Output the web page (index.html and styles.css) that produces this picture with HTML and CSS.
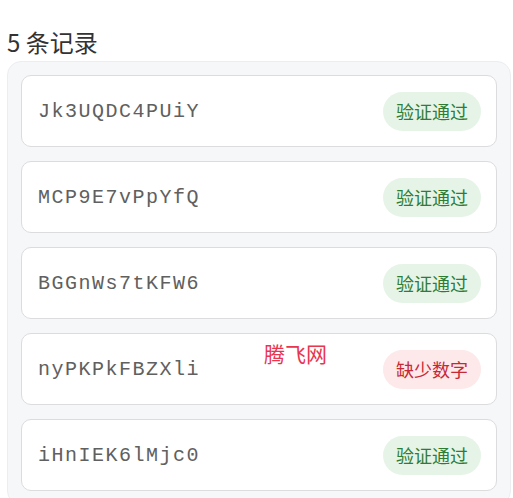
FILE: index.html
```html
<!DOCTYPE html>
<html lang="zh-CN">
<head>
    <meta charset="UTF-8">
    <meta name="viewport" content="width=device-width, initial-scale=1.0">
    <title>记录</title>
    <link rel="stylesheet" href="styles.css">
</head>
<body>
    <h2 class="count-title">5 条记录</h2>
    <div class="record-list">
        <div class="record-card">
            <span class="record-code">Jk3UQDC4PUiY</span>
            <span class="status-badge ok">验证通过</span>
        </div>
        <div class="record-card">
            <span class="record-code">MCP9E7vPpYfQ</span>
            <span class="status-badge ok">验证通过</span>
        </div>
        <div class="record-card">
            <span class="record-code">BGGnWs7tKFW6</span>
            <span class="status-badge ok">验证通过</span>
        </div>
        <div class="record-card">
            <span class="record-code">nyPKPkFBZXli</span>
            <span class="watermark">腾飞网</span>
            <span class="status-badge fail">缺少数字</span>
        </div>
        <div class="record-card">
            <span class="record-code">iHnIEK6lMjc0</span>
            <span class="status-badge ok">验证通过</span>
        </div>
    </div>
</body>
</html>
```

FILE: styles.css
```css
body {
    margin: 0;
    padding: 0 2px 0 7px;
    font-family: "Noto Sans CJK SC", "Noto Sans", sans-serif;
    background: #ffffff;
    color: #333333;
}
.count-title {
    margin: 27px 0 4px 0;
    font-size: 24px;
    font-weight: normal;
    line-height: 30px;
    color: #333333;
}
.record-list {
    display: flex;
    flex-direction: column;
    gap: 14px;
    padding: 13px 13px 13px 13px;
    background-color: #f6f7f9;
    border: 1px solid #ebedf0;
    border-radius: 14px;
}
.record-card {
    position: relative;
    display: flex;
    align-items: center;
    justify-content: space-between;
    height: 72px;
    box-sizing: border-box;
    padding: 0 15px 0 16px;
    background-color: #ffffff;
    border: 1.5px solid #dcdcdf;
    border-radius: 10px;
}
.record-code {
    font-family: "Liberation Mono", monospace;
    font-size: 20px;
    letter-spacing: 1.5px;
    color: #606060;
}
.status-badge {
    padding: 0 13px;
    height: 39px;
    line-height: 39px;
    border-radius: 20px;
    font-size: 18px;
}
.status-badge.ok {
    background-color: #e6f4e7;
    color: #2e7d32;
}
.status-badge.fail {
    background-color: #fde8ea;
    color: #c62834;
}
.watermark {
    position: absolute;
    left: 242px;
    top: 4px;
    font-size: 21px;
    color: #e8364f;
}
```
